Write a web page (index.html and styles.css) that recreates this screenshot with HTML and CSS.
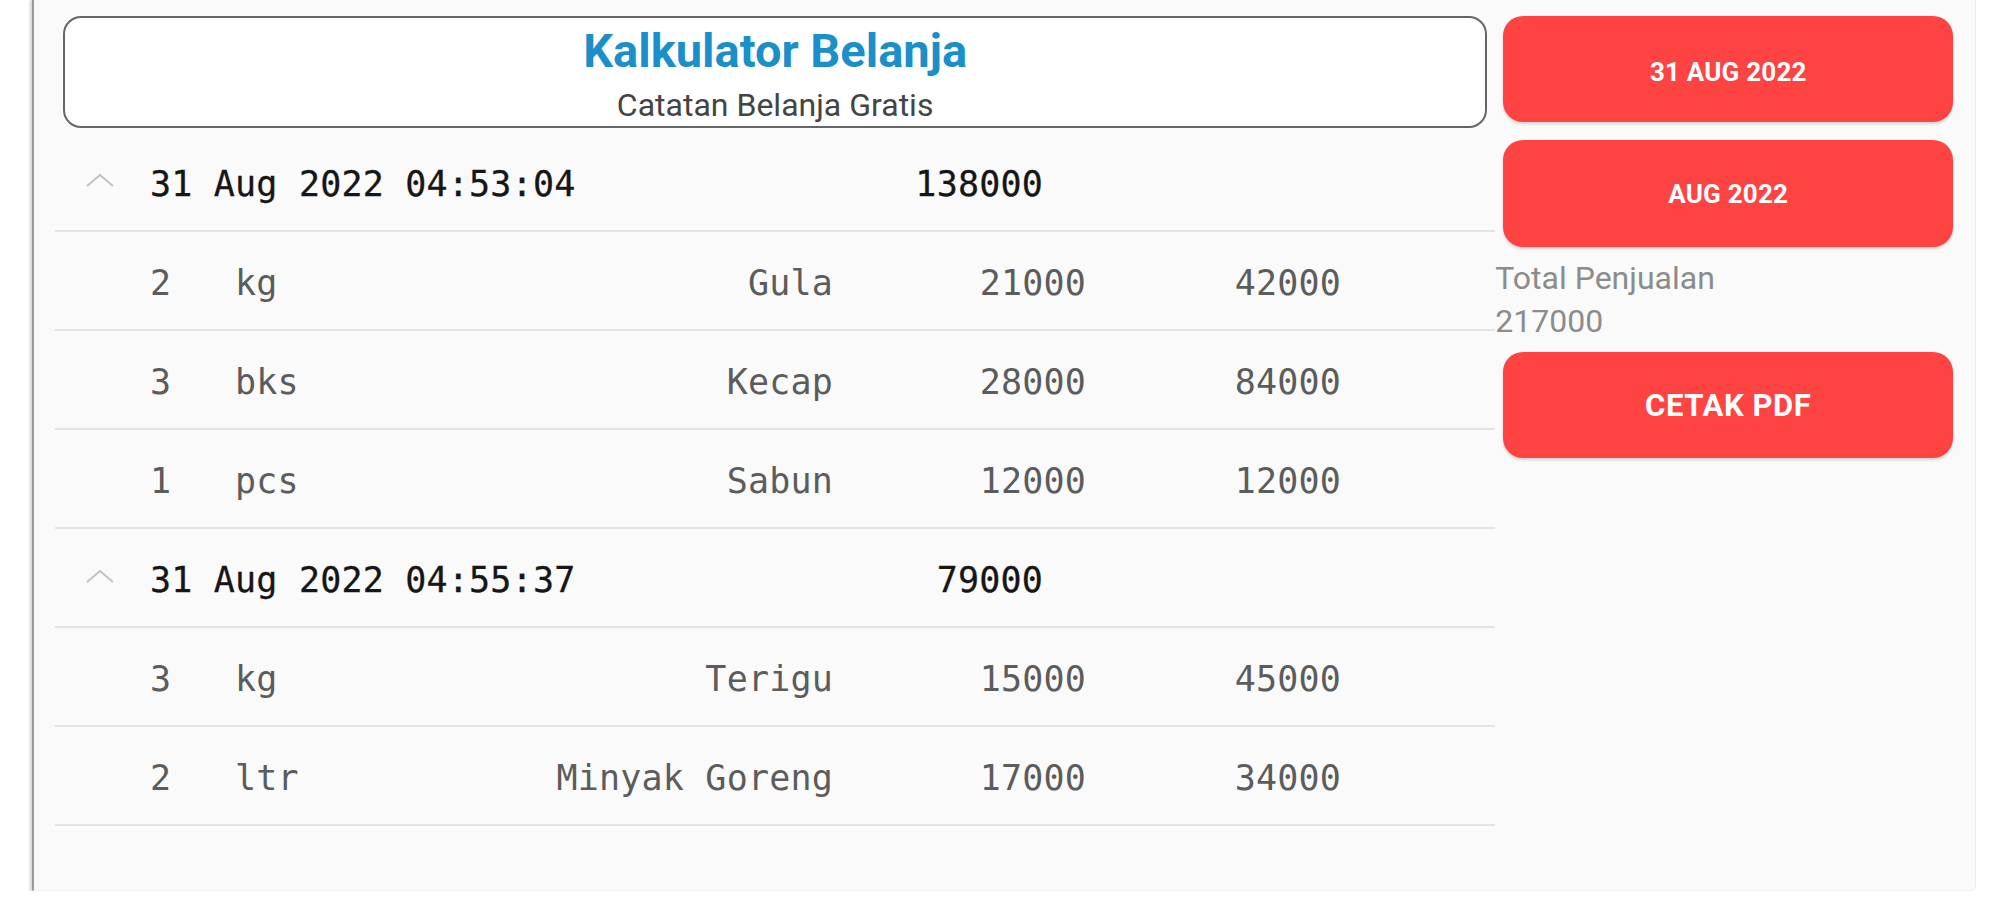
FILE: index.html
```html
<!DOCTYPE html>
<html lang="id">
<head>
<meta charset="utf-8">
<title>Kalkulator Belanja</title>
<link rel="stylesheet" href="styles.css">
</head>
<body>
<div class="panel">
  <main class="main">
    <header class="title-card">
      <h1 class="title">Kalkulator Belanja</h1>
      <p class="subtitle">Catatan Belanja Gratis</p>
    </header>
    <section class="list">
      <div class="row group">
        <span class="chev"><svg width="30" height="15" viewBox="0 0 30 15"><polyline points="2,13 15,2 28,13" fill="none" stroke="#c2c2c2" stroke-width="2"/></svg></span>
        <span class="date">31 Aug 2022 04:53:04</span>
        <span class="sum">138000</span>
      </div>
      <div class="row item">
        <span></span><span>2</span><span>kg</span><span class="r">Gula</span><span class="r">21000</span><span class="r">42000</span>
      </div>
      <div class="row item">
        <span></span><span>3</span><span>bks</span><span class="r">Kecap</span><span class="r">28000</span><span class="r">84000</span>
      </div>
      <div class="row item">
        <span></span><span>1</span><span>pcs</span><span class="r">Sabun</span><span class="r">12000</span><span class="r">12000</span>
      </div>
      <div class="row group">
        <span class="chev"><svg width="30" height="15" viewBox="0 0 30 15"><polyline points="2,13 15,2 28,13" fill="none" stroke="#c2c2c2" stroke-width="2"/></svg></span>
        <span class="date">31 Aug 2022 04:55:37</span>
        <span class="sum">79000</span>
      </div>
      <div class="row item">
        <span></span><span>3</span><span>kg</span><span class="r">Terigu</span><span class="r">15000</span><span class="r">45000</span>
      </div>
      <div class="row item">
        <span></span><span>2</span><span>ltr</span><span class="r">Minyak Goreng</span><span class="r">17000</span><span class="r">34000</span>
      </div>
    </section>
  </main>
  <aside class="side">
    <button class="btn btn-sm">31 AUG 2022</button>
    <button class="btn btn-sm btn-second">AUG 2022</button>
    <div class="total">
      <div>Total Penjualan</div>
      <div>217000</div>
    </div>
    <button class="btn btn-lg">CETAK PDF</button>
  </aside>
</div>
</body>
</html>
```

FILE: styles.css
```css
html, body {
  margin: 0;
  padding: 0;
  background: #ffffff;
}

.panel {
  margin-left: 32px;
  width: 1941px;
  height: 890px;
  background: #fafafa;
  border-left: 2px solid #9a9a9a;
  border-right: 1px solid #ededed;
  border-bottom: 1px solid #f1f1f1;
  border-bottom-right-radius: 6px;
  box-shadow: -2px 0 3px rgba(0, 0, 0, 0.18);
  display: flex;
  align-items: flex-start;
}

.main {
  margin-left: 21px;
  width: 1441px;
  padding-top: 16px;
}

.title-card {
  margin: 0 8px;
  height: 112px;
  box-sizing: border-box;
  border: 2px solid #666666;
  border-radius: 18px;
  background: #ffffff;
  text-align: center;
}

.title {
  margin: 6px 0 0;
  font-family: Roboto, "Liberation Sans", sans-serif;
  font-weight: 700;
  font-size: 47px;
  line-height: 54px;
  color: #1a8fca;
}

.subtitle {
  margin: 9px 0 0;
  font-family: Roboto, "Liberation Sans", sans-serif;
  font-size: 32px;
  line-height: 37px;
  color: #444444;
}

.list {
  margin-top: 5px;
}

.row {
  display: grid;
  height: 97px;
  box-sizing: content-box;
  border-bottom: 2px solid #e4e4e4;
  align-items: center;
  font-family: "DejaVu Sans Mono", "Liberation Mono", monospace;
  font-size: 35px;
  letter-spacing: 0.2px;
  white-space: pre;
}

.row > span {
  padding-top: 5px;
}

.group {
  grid-template-columns: 95px 683px 210px;
  color: #161616;
}

.group .date,
.group .sum {
  -webkit-text-stroke: 0.3px #161616;
}

.item {
  grid-template-columns: 95px 85px 150px 448px 253px 255px;
  color: #5c5c5c;
}

.row > span.chev {
  display: flex;
  padding-left: 30px;
  padding-top: 0;
  padding-bottom: 2px;
}

.sum, .r {
  text-align: right;
}

.side {
  width: 480px;
  padding-top: 16px;
  display: flex;
  flex-direction: column;
  align-items: flex-start;
}

.btn {
  margin-left: 8px;
  width: 450px;
  height: 106px;
  border: none;
  border-radius: 20px;
  background: #fe4343;
  color: #ffffff;
  font-family: Roboto, "Liberation Sans", sans-serif;
  font-weight: 700;
  box-shadow: 0 2px 3px rgba(0, 0, 0, 0.16);
  padding: 0;
}

.btn-sm {
  font-size: 26px;
  letter-spacing: 0.2px;
  padding-top: 5px;
}

.btn-second {
  margin-top: 18px;
  height: 107px;
  padding-top: 0;
}

.btn-lg {
  margin-top: 9px;
  font-size: 31px;
  letter-spacing: 0.6px;
}

.total {
  margin-top: 10px;
  font-family: Roboto, "Liberation Sans", sans-serif;
  font-size: 32px;
  line-height: 43px;
  color: #8c8c8c;
}
```
